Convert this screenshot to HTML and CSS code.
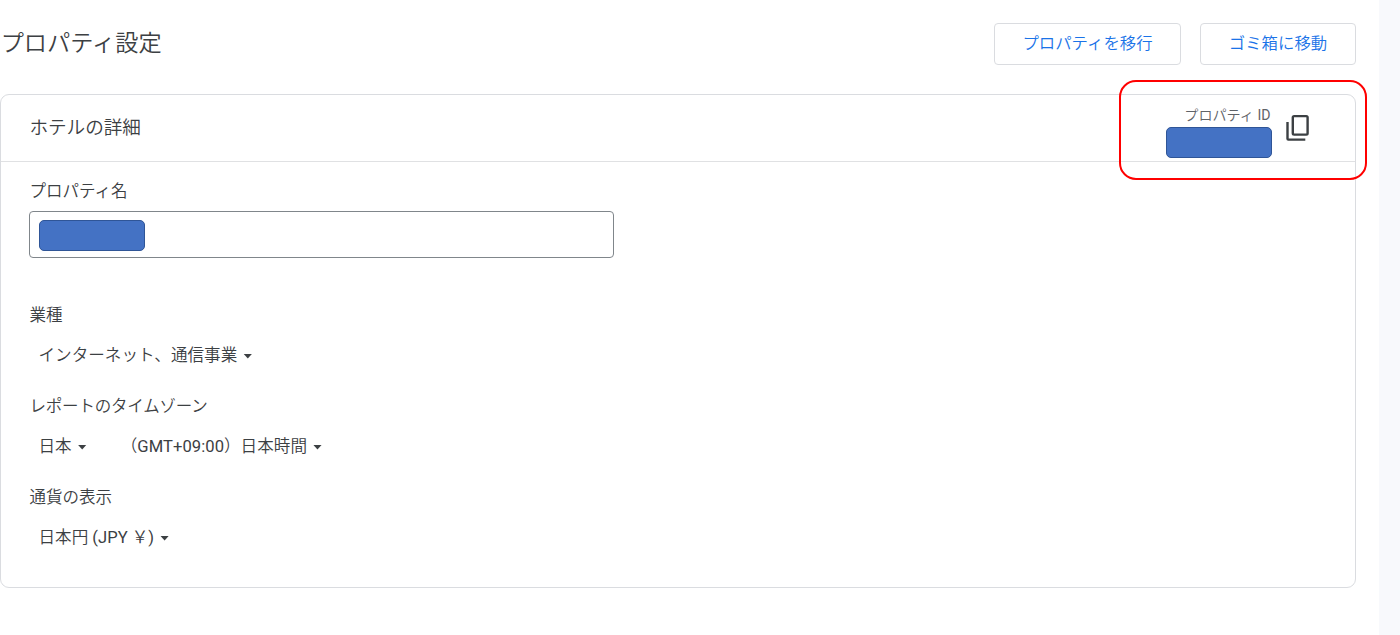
FILE: index.html
```html
<!DOCTYPE html>
<html lang="ja">
<head>
<meta charset="utf-8">
<title>プロパティ設定</title>
<link rel="stylesheet" href="styles.css">
</head>
<body>
<main class="page">
  <header class="topbar">
    <h1 class="title">プロパティ設定</h1>
    <div class="actions">
      <button class="btn btn-wide">プロパティを移行</button>
      <button class="btn">ゴミ箱に移動</button>
    </div>
  </header>
  <section class="card">
    <div class="card-head">
      <h2 class="card-title">ホテルの詳細</h2>
      <div class="property-id">
        <div class="id-block">
          <span class="id-label">プロパティ <span class="latin">ID</span></span>
          <span class="mask"></span>
        </div>
        <svg class="copy" width="24" height="28" viewBox="0 0 24 28" fill="none" stroke="#3c4043" stroke-width="2.4"><rect x="6.8" y="2.1" width="14.8" height="18.5" rx="1.3"/><path d="M1.5 8v16.8q0 .8.8.8h17"/></svg>
      </div>
      <div class="highlight"></div>
    </div>
    <div class="card-body">
      <div class="label">プロパティ名</div>
      <div class="field"><span class="mask"></span></div>
      <div class="label">業種</div>
      <div class="row"><span class="select">インターネット、通信事業</span></div>
      <div class="label timezone">レポートのタイムゾーン</div>
      <div class="row"><span class="select">日本</span><span class="select zone">（<span class="latin gmt">GMT+09:00</span>）日本時間</span></div>
      <div class="label">通貨の表示</div>
      <div class="row"><span class="select">日本円&nbsp;<span class="latin">(JPY&nbsp;</span>￥<span class="latin">)</span></span></div>
    </div>
  </section>
</main>
</body>
</html>
```
FILE: styles.css
```css
* { box-sizing: border-box; }
body {
  margin: 0;
  background: #f8f9fc;
  color: #3c4043;
  font: 350 16.5px/24px Roboto, "Noto Sans CJK JP DemiLight", "Noto Sans CJK JP", sans-serif;
}
.latin { font-weight: 400; }
.gmt { letter-spacing: .06px; }
.page { width: 1379px; height: 635px; padding: 23px 23px 0 0; background: #fff; }
.topbar { display: flex; justify-content: space-between; height: 71px; }
.title { margin: 0; padding-left: .7px; font-size: 23.2px; line-height: 40px; font-weight: 350; }
.actions { display: flex; gap: 19px; }
.btn {
  width: 156px;
  height: 42px;
  padding: 0 0 1px;
  border: 1px solid #dadce0;
  border-radius: 4px;
  background: #fff;
  color: #1a73e8;
  font: inherit;
  font-size: 16.4px;
}
.btn-wide { width: 187px; }
.card { height: 494px; border: 1px solid #dadce0; border-radius: 9px; }
.card-head {
  position: relative;
  display: flex;
  justify-content: space-between;
  height: 67px;
  padding: 0 45px 0 28px;
  border-bottom: 1px solid #e0e1e3;
}
.card-title { margin: 0; padding-left: .4px; font-size: 18.6px; line-height: 67px; font-weight: 350; }
.property-id { display: flex; gap: 14px; padding-top: 10px; }
.id-block { display: flex; flex-direction: column; align-items: flex-end; }
.id-label { height: 22px; padding-right: 1.5px; font-size: 14.1px; line-height: 20px; color: #5f6368; }
.mask { display: block; width: 106px; height: 31px; border: 1.5px solid #2f5597; border-radius: 5px; background: #4472c4; }
.copy { margin-top: 9px; }
.highlight {
  position: absolute;
  top: -15px;
  right: -12px;
  width: 248px;
  height: 100px;
  border: 2px solid #f00;
  border-radius: 17px;
}
.card-body { padding: 18px 28px 0; }
.label { height: 24px; padding-left: .5px; }
.timezone { letter-spacing: -.2px; }
.field { width: 585px; height: 47px; margin: 7px 0 46px; padding: 8px 9px; border: 1px solid #80868b; border-radius: 4px; }
.row { display: flex; margin: 16px 0 27px; padding-left: 9.5px; height: 24px; font-size: 16.6px; }
.select { display: flex; align-items: center; white-space: nowrap; }
.select::after {
  content: "";
  width: 9px;
  height: 5px;
  margin-left: 6px;
  background: #3c4043;
  clip-path: polygon(0 0, 100% 0, 50% 100%);
}
.zone { margin-left: 34px; }
```
